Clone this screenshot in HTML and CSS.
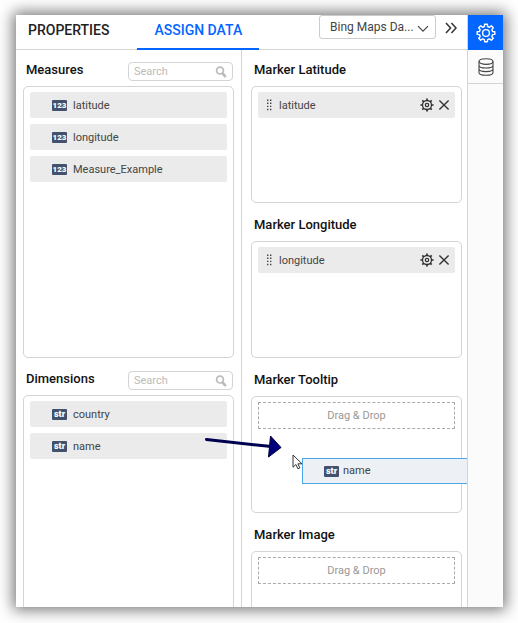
FILE: index.html
```html
<!DOCTYPE html>
<html lang="en">
<head>
<meta charset="utf-8">
<title>Assign Data</title>
<link rel="stylesheet" href="styles.css">
</head>
<body>
<svg class="defs" aria-hidden="true">
  <symbol id="search" viewBox="0 0 12 12"><circle cx="5" cy="4.600" r="3.400" fill="none" stroke="currentColor" stroke-width="1.700"/><path d="M7.800 7.600L10 10.200" stroke="currentColor" stroke-width="2.600" stroke-linecap="round"/></symbol>
  <symbol id="grip" viewBox="0 0 6 12"><path d="M1 .5h1.400v1.400H1zM4 .5h1.400v1.400H4zM1 3.600h1.400V5H1zM4 3.600h1.400V5H4zM1 6.700h1.400v1.400H1zM4 6.700h1.400v1.400H4zM1 9.800h1.400v1.400H1zM4 9.800h1.400v1.400H4z" fill="currentColor"/></symbol>
  <symbol id="cog" viewBox="0 0 14 14"><g fill="none" stroke="currentColor"><circle cx="7" cy="7" r="4.500" stroke-width="1.300"/><circle cx="7" cy="7" r="1.700" stroke-width="1.200"/><path stroke-width="1.700" d="M7 .4v2M7 11.600v2M.4 7h2M11.600 7h2M2.300 2.300l1.500 1.500M10.200 10.200l1.500 1.500M2.300 11.700l1.500-1.500M10.200 3.800l1.500-1.500"/></g></symbol>
  <symbol id="close" viewBox="0 0 12 12"><path d="M1.400 1.400l9.200 9.200M10.600 1.400l-9.200 9.200" fill="none" stroke="currentColor" stroke-width="1.400"/></symbol>
</svg>
<div class="window">
  <main class="panel">
    <header class="header">
      <nav class="tabs">
        <button class="tab" type="button">PROPERTIES</button>
        <button class="tab active" type="button">ASSIGN DATA</button>
      </nav>
      <div class="source">
        <select class="source-select" aria-label="Data source"><option>Bing Maps Da...</option></select>
        <svg class="chevron" viewBox="0 0 12 8" aria-hidden="true"><path d="M1 1.200l5 5 5-5" fill="none" stroke="currentColor" stroke-width="1.200"/></svg>
      </div>
      <button class="icon-button collapse" type="button" aria-label="Collapse">
        <svg viewBox="0 0 12 12" width="12" height="12"><path d="M1 1l4.600 5L1 11M6.400 1L11 6l-4.600 5" fill="none" stroke="currentColor" stroke-width="1.500"/></svg>
      </button>
    </header>
    <div class="columns">
      <section class="column fields">
        <div class="heading"><h2>Measures</h2>
          <label class="search"><input type="text" placeholder="Search" aria-label="Search measures"><svg><use href="#search"/></svg></label></div>
        <ul class="box tall">
          <li class="item field"><span class="badge">123</span><span class="name">latitude</span></li>
          <li class="item field"><span class="badge">123</span><span class="name">longitude</span></li>
          <li class="item field"><span class="badge">123</span><span class="name">Measure_Example</span></li>
        </ul>
        <div class="heading"><h2>Dimensions</h2>
          <label class="search"><input type="text" placeholder="Search" aria-label="Search dimensions"><svg><use href="#search"/></svg></label></div>
        <ul class="box tall">
          <li class="item field"><span class="badge str">str</span><span class="name">country</span></li>
          <li class="item field"><span class="badge str">str</span><span class="name">name</span></li>
        </ul>
      </section>
      <section class="column targets">
        <div class="heading"><h2>Marker Latitude</h2></div>
        <div class="box"><div class="item assigned"><svg class="grip"><use href="#grip"/></svg><span class="name">latitude</span>
          <button class="icon-button" type="button" aria-label="Settings"><svg width="14" height="14"><use href="#cog"/></svg></button>
          <button class="icon-button" type="button" aria-label="Remove"><svg width="12" height="12"><use href="#close"/></svg></button></div></div>
        <div class="heading"><h2>Marker Longitude</h2></div>
        <div class="box"><div class="item assigned"><svg class="grip"><use href="#grip"/></svg><span class="name">longitude</span>
          <button class="icon-button" type="button" aria-label="Settings"><svg width="14" height="14"><use href="#cog"/></svg></button>
          <button class="icon-button" type="button" aria-label="Remove"><svg width="12" height="12"><use href="#close"/></svg></button></div></div>
        <div class="heading"><h2>Marker Tooltip</h2></div>
        <div class="box"><div class="drop">Drag &amp; Drop</div></div>
        <div class="heading"><h2>Marker Image</h2></div>
        <div class="box"><div class="drop">Drag &amp; Drop</div></div>
      </section>
    </div>
    <div class="dragged"><span class="badge str">str</span>name</div>
    <svg class="arrow" viewBox="0 0 78 24" aria-hidden="true"><path d="M1.500 4.500L64 11.300" stroke="#000050" stroke-width="3" stroke-linecap="round"/><path d="M65.500 1L76 12.500L63.500 22z" fill="#00007a" stroke="#000038"/></svg>
    <svg class="cursor" viewBox="0 0 11 16" aria-hidden="true"><path d="M1 1v12.200l2.900-2.700 2 4.300 2-.9-2-4.100H10z" fill="#fff" stroke="#333"/></svg>
  </main>
  <aside class="rail">
    <button class="rail-button active" type="button" aria-label="Widget settings">
      <svg viewBox="0 0 20 20" width="20" height="20"><g fill="none" stroke="currentColor" stroke-width="1.400" stroke-linejoin="round"><path d="M8.400 3.500L8.600 1.200h2.800l.2 2.300 1.900.8 1.800-1.500 2 2-1.500 1.800.7 1.900 2.300.2v2.700l-2.300.2-.7 1.900 1.500 1.800-2 2-1.800-1.500-1.900.8-.2 2.200H8.600l-.2-2.200-1.900-.8-1.800 1.500-2-2 1.500-1.800-.7-1.900-2.300-.2V8.700l2.300-.2.700-1.900-1.500-1.800 2-2 1.800 1.500z"/><circle cx="10" cy="10" r="3.400"/></g></svg>
    </button>
    <button class="rail-button" type="button" aria-label="Data sources">
      <svg viewBox="0 0 16 18" width="16" height="18"><g fill="none" stroke="currentColor" stroke-width="1.100"><ellipse cx="8" cy="3.600" rx="7" ry="2.800"/><path d="M1 3.600v10.800c0 1.500 3 2.800 7 2.800s7-1.300 7-2.800V3.600M1 7.200C1 8.700 4 10 8 10s7-1.300 7-2.800M1 10.800c0 1.500 3 2.800 7 2.800s7-1.300 7-2.800"/></g></svg>
    </button>
  </aside>
</div>
</body>
</html>
```
FILE: styles.css
```css
* { box-sizing: border-box; }
body {
  margin: 0;
  padding: 15px 15px 16px 16px;
  height: 100vh;
  overflow: hidden;
  font: 11px/16px Roboto, sans-serif;
  color: #444;
  background: #fff;
}
button, input, select { font: inherit; color: inherit; }
button { border: 0; padding: 0; background: none; }
h2, ul { margin: 0; padding: 0; }
svg { display: block; }
.defs { position: absolute; width: 0; height: 0; }
.window {
  display: flex;
  height: 100%;
  background: #fff;
  box-shadow: 0 0 14px 3px #777;
}
.panel {
  position: relative;
  display: flex;
  flex: 1;
  flex-direction: column;
  min-width: 0;
  overflow: hidden;
  border-right: 1px solid #d4d4d4;
}
.header {
  display: flex;
  flex: none;
  height: 35px;
  padding-right: 10px;
  border-bottom: 1px solid #d4d4d4;
}
.tabs { display: flex; flex: 1; gap: 16px; margin-bottom: -1px; padding-left: 12px; }
.tab {
  padding: 0 12px 3px 0;
  font-size: 14px;
  font-weight: 500;
  color: #222;
  border-bottom: 2px solid transparent;
}
.tab.active { padding: 0 17px 3px; color: #0565ff; border-color: #0565ff; }
.source { position: relative; width: 117px; height: 24px; margin-right: 9px; }
.source-select {
  appearance: none;
  width: 100%;
  height: 100%;
  padding: 0 22px 0 10px;
  font-size: 12px;
  background: #fff;
  border: 1px solid #ccc;
  border-radius: 3px;
}
.chevron { position: absolute; right: 7px; top: 10px; width: 12px; height: 8px; }
.icon-button { flex: none; color: #333; }
.collapse { height: 25px; }
.columns { display: flex; flex: 1; min-height: 0; }
.column { display: flex; flex: 1; flex-direction: column; min-width: 0; }
.fields { padding: 0 7px; border-right: 1px solid #d4d4d4; }
.targets { padding: 0 5px 0 9px; }
.heading {
  display: flex;
  flex: none;
  align-items: center;
  justify-content: space-between;
  height: 36px;
  padding: 4px 1px 0 3px;
}
h2 { font-size: 13px; font-weight: 500; color: #111; }
.search {
  display: flex;
  align-items: center;
  width: 105px;
  height: 19px;
  margin-top: 3px;
  padding: 1px 5px 0;
  border: 1px solid #d4d4d4;
  border-radius: 4px;
  color: #bbb;
}
.search input { flex: 1; min-width: 0; padding: 0; border: 0; outline: 0; background: none; }
.search input::placeholder { color: #bbb; }
.search svg { width: 12px; height: 12px; }
.box {
  display: flex;
  flex: none;
  flex-direction: column;
  gap: 6px;
  height: 117px;
  margin-bottom: 2px;
  padding: 5px 6px;
  border: 1px solid #d4d4d4;
  border-radius: 5px;
}
.box.tall { height: 272px; margin-bottom: 1px; }
.item {
  display: flex;
  flex: none;
  align-items: center;
  height: 26px;
  background: #ebebeb;
  border-radius: 2px;
}
.field { padding-left: 22px; }
.assigned { gap: 4px; padding: 0 5px 0 8px; }
.name { flex: 1; padding-top: 1px; }
.grip { width: 6px; height: 12px; margin-right: 3px; }
.badge {
  width: 15px;
  height: 11px;
  margin-right: 6px;
  font: 900 8px/11px Roboto, sans-serif;
  text-align: center;
  color: #fff;
  background: #42526e;
  border-radius: 1px;
}
.badge.str { font-size: 9px; line-height: 10px; }
.drop {
  height: 27px;
  line-height: 25px;
  text-align: center;
  color: #999;
  border: 1px dashed #aaa;
}
.dragged {
  position: absolute;
  left: 286px;
  right: -30px;
  top: 443px;
  display: flex;
  align-items: center;
  height: 26px;
  padding-left: 21px;
  background: #edf0f4;
  border: 1px solid #4aa8ea;
}
.dragged .badge { margin-right: 4px; }
.arrow { position: absolute; left: 189px; top: 420px; width: 78px; height: 24px; }
.cursor { position: absolute; left: 276px; top: 439px; width: 11px; height: 16px; }
.rail { width: 35px; background: #fbfbfb; }
.rail-button {
  display: grid;
  place-items: center;
  width: 100%;
  height: 34px;
  color: #444;
  border-bottom: 1px solid #d4d4d4;
}
.rail-button.active { height: 35px; color: #fff; background: #0565ff; border: 0; }
```
